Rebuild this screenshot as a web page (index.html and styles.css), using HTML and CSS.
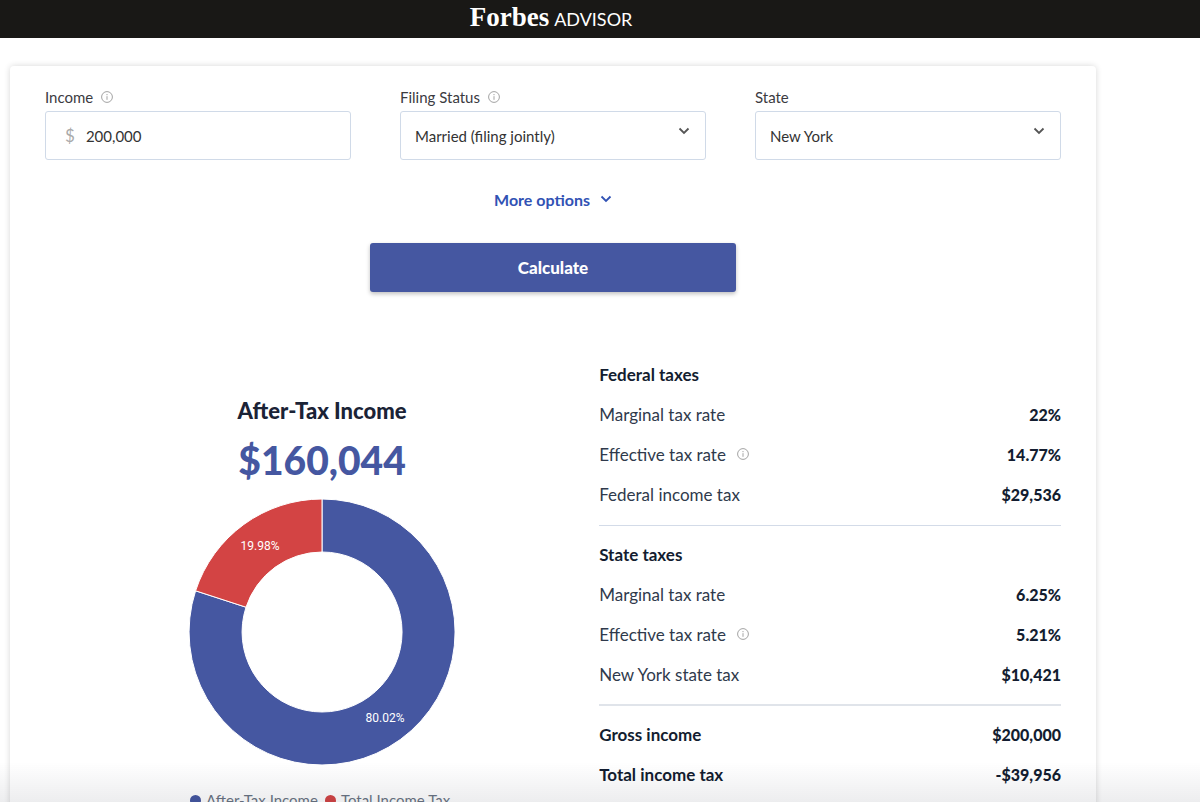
FILE: index.html
```html
<!DOCTYPE html>
<html lang="en">
<head>
<meta charset="utf-8">
<meta name="viewport" content="width=device-width, initial-scale=1">
<title>Income Tax Calculator - Forbes Advisor</title>
<link rel="stylesheet" href="styles.css">
</head>
<body>
<svg class="sprite" aria-hidden="true">
  <symbol id="info" viewBox="0 0 12 12">
    <circle cx="6" cy="6" r="5.400" fill="none" stroke="currentColor"/>
    <path d="M6 5.200v3.600M6 3v1.200" fill="none" stroke="currentColor"/>
  </symbol>
  <symbol id="chevron" viewBox="0 0 12 8">
    <path d="M1.500 1.500 6 6l4.500-4.500" fill="none" stroke="currentColor" stroke-width="1.800"/>
  </symbol>
</svg>
<div class="page">
  <header class="topbar">
    <a class="logo" href="#"><span class="logo-name">Forbes</span><span class="logo-unit">ADVISOR</span></a>
  </header>
  <main class="card">
    <form class="form">
      <div class="fields">
        <div class="field">
          <div class="label-row"><label for="income">Income</label><svg class="info"><use href="#info"/></svg></div>
          <div class="control money"><span class="currency">$</span><input id="income" type="text" value="200,000"></div>
        </div>
        <div class="field">
          <div class="label-row"><label for="status">Filing Status</label><svg class="info"><use href="#info"/></svg></div>
          <div class="control">
            <select id="status"><option>Married (filing jointly)</option><option>Single</option></select>
            <svg class="chevron select-arrow"><use href="#chevron"/></svg>
          </div>
        </div>
        <div class="field">
          <div class="label-row"><label for="state">State</label></div>
          <div class="control">
            <select id="state"><option>New York</option><option>New Jersey</option></select>
            <svg class="chevron select-arrow"><use href="#chevron"/></svg>
          </div>
        </div>
      </div>
      <button class="more" type="button">More options<svg class="chevron"><use href="#chevron"/></svg></button>
      <button class="calculate" type="button">Calculate</button>
    </form>
    <div class="results">
      <section class="summary">
        <h2 class="summary-title">After-Tax Income</h2>
        <p class="amount">$160,044</p>
        <svg class="donut" viewBox="-133 -133 266 266" role="img" aria-label="After-tax income 80.02%, total income tax 19.98%">
          <path class="slice-net" d="M0-133A133 133 0 1 1-126.400-41.200L-76-24.800A80 80 0 1 0 0-80Z"/>
          <path class="slice-tax" d="M-126.400-41.200A133 133 0 0 1 0-133V-80A80 80 0 0 0-76-24.800Z"/>
          <text class="slice-label" x="-62" y="-82">19.98%</text>
          <text class="slice-label" x="63" y="90">80.02%</text>
        </svg>
        <ul class="legend">
          <li><span class="dot dot-net"></span>After-Tax Income</li>
          <li><span class="dot dot-tax"></span>Total Income Tax</li>
        </ul>
      </section>
      <section class="breakdown">
        <div class="group">
          <h3 class="row heading">Federal taxes</h3>
          <div class="row"><span>Marginal tax rate</span><b>22%</b></div>
          <div class="row"><span class="with-info">Effective tax rate<svg class="info"><use href="#info"/></svg></span><b>14.77%</b></div>
          <div class="row"><span>Federal income tax</span><b>$29,536</b></div>
        </div>
        <div class="group group-last">
          <h3 class="row heading">State taxes</h3>
          <div class="row"><span>Marginal tax rate</span><b>6.25%</b></div>
          <div class="row"><span class="with-info">Effective tax rate<svg class="info"><use href="#info"/></svg></span><b>5.21%</b></div>
          <div class="row"><span>New York state tax</span><b>$10,421</b></div>
        </div>
        <div class="totals">
          <div class="row"><b>Gross income</b><b class="value">$200,000</b></div>
          <div class="row"><b>Total income tax</b><b class="value">-$39,956</b></div>
        </div>
      </section>
    </div>
  </main>
  <div class="fade"></div>
</div>
</body>
</html>
```
FILE: styles.css
```css
* { box-sizing: border-box; }
body { margin: 0; font-family: Lato, sans-serif; color: #1b2336; background: #fff; }
h2, h3, p, ul { margin: 0; padding: 0; }
button, input, select { font: inherit; color: inherit; }
.sprite { position: absolute; width: 0; height: 0; }
.page { height: 100vh; overflow: hidden; }

.topbar { display: flex; justify-content: center; height: 38px; padding: 0 104px 0 6px; background: #191816; margin-bottom: 28px; }
.logo { display: flex; align-items: baseline; gap: 5px; color: #fff; text-decoration: none; line-height: 34px; }
.logo-name { font-family: "Liberation Serif", serif; font-weight: 700; font-size: 27px; }
.logo-unit { font-size: 18px; }

.card { margin: 0 104px 0 10px; padding: 21px 35px 40px; border-radius: 4px; background: #fff; box-shadow: 0 0 6px rgba(0, 0, 0, 0.16); }
.form { display: flex; flex-direction: column; align-items: center; }
.fields { display: grid; grid-template-columns: repeat(3, 1fr); gap: 49px; width: 100%; }
.label-row { display: flex; align-items: center; gap: 8px; height: 20px; margin-bottom: 4px; font-size: 15px; color: #3b3b3f; }
.info { width: 12px; height: 12px; color: #a3a3a3; }
.control { position: relative; display: flex; align-items: center; height: 49px; border: 1px solid #d0dae8; border-radius: 3px; font-size: 15px; color: #333; }
.control input, .control select { width: 100%; height: 100%; border: 0; background: none; outline: 0; appearance: none; }
.control select { padding: 0 40px 0 14px; }
.money { padding-left: 19px; }
.currency { font-size: 17px; color: #aaa; }
.control input { padding: 0 11px; }
.chevron { width: 12px; height: 8px; }
.select-arrow { position: absolute; right: 15px; top: 15px; color: #555; pointer-events: none; }
.more { display: flex; align-items: center; gap: 10px; height: 24px; margin: 27px 0 32px; padding: 0; border: 0; background: none; font-size: 16px; font-weight: 700; color: #3152b4; }
.calculate { width: 36%; height: 49px; border: 0; border-radius: 3px; background: #4557a1; color: #fff; font-size: 17px; font-weight: 900; box-shadow: 0 2px 4px rgba(0, 0, 0, 0.25); }

.results { display: grid; grid-template-columns: 6fr 5fr; margin-top: 63px; }
.summary { display: flex; flex-direction: column; align-items: center; padding-top: 40px; }
.summary-title { font-size: 22px; line-height: 32px; font-weight: 900; }
.amount { font-size: 39px; line-height: 48px; margin: 9px 0 15px; font-weight: 900; color: #4557a1; }
.donut { width: 48%; height: auto; }
.slice-net, .slice-tax { stroke: #fff; stroke-width: 1; }
.slice-net { fill: #4557a1; }
.slice-tax { fill: #d34444; }
.slice-label { fill: #fff; font: 12px Roboto, sans-serif; text-anchor: middle; }
.legend { display: flex; gap: 7px; margin-top: 25px; padding-right: 4px; list-style: none; font-size: 15px; line-height: 20px; color: #6a7483; }
.legend li { display: flex; align-items: center; gap: 5px; }
.dot { width: 11px; height: 11px; border-radius: 50%; }
.dot-net { background: #4557a1; }
.dot-tax { background: #d34444; }

.row { display: flex; justify-content: space-between; align-items: center; height: 40px; padding-bottom: 2px; font-size: 17px; color: #2f3a4c; }
.row b, .heading { font-weight: 700; color: #131d30; }
.row span + b, .row .value { font-size: 16px; font-weight: 900; }
.with-info { display: flex; align-items: center; gap: 11px; }
.group { padding-bottom: 10px; margin-bottom: 9px; border-bottom: 1px solid #d3dbe8; }
.group-last { padding-bottom: 9px; border-bottom: 2px solid #e0e4ea; }
.fade { position: fixed; left: 0; right: 0; bottom: 0; height: 40px; background: linear-gradient(rgba(20, 25, 45, 0), rgba(20, 25, 45, 0.08)); pointer-events: none; }
```
